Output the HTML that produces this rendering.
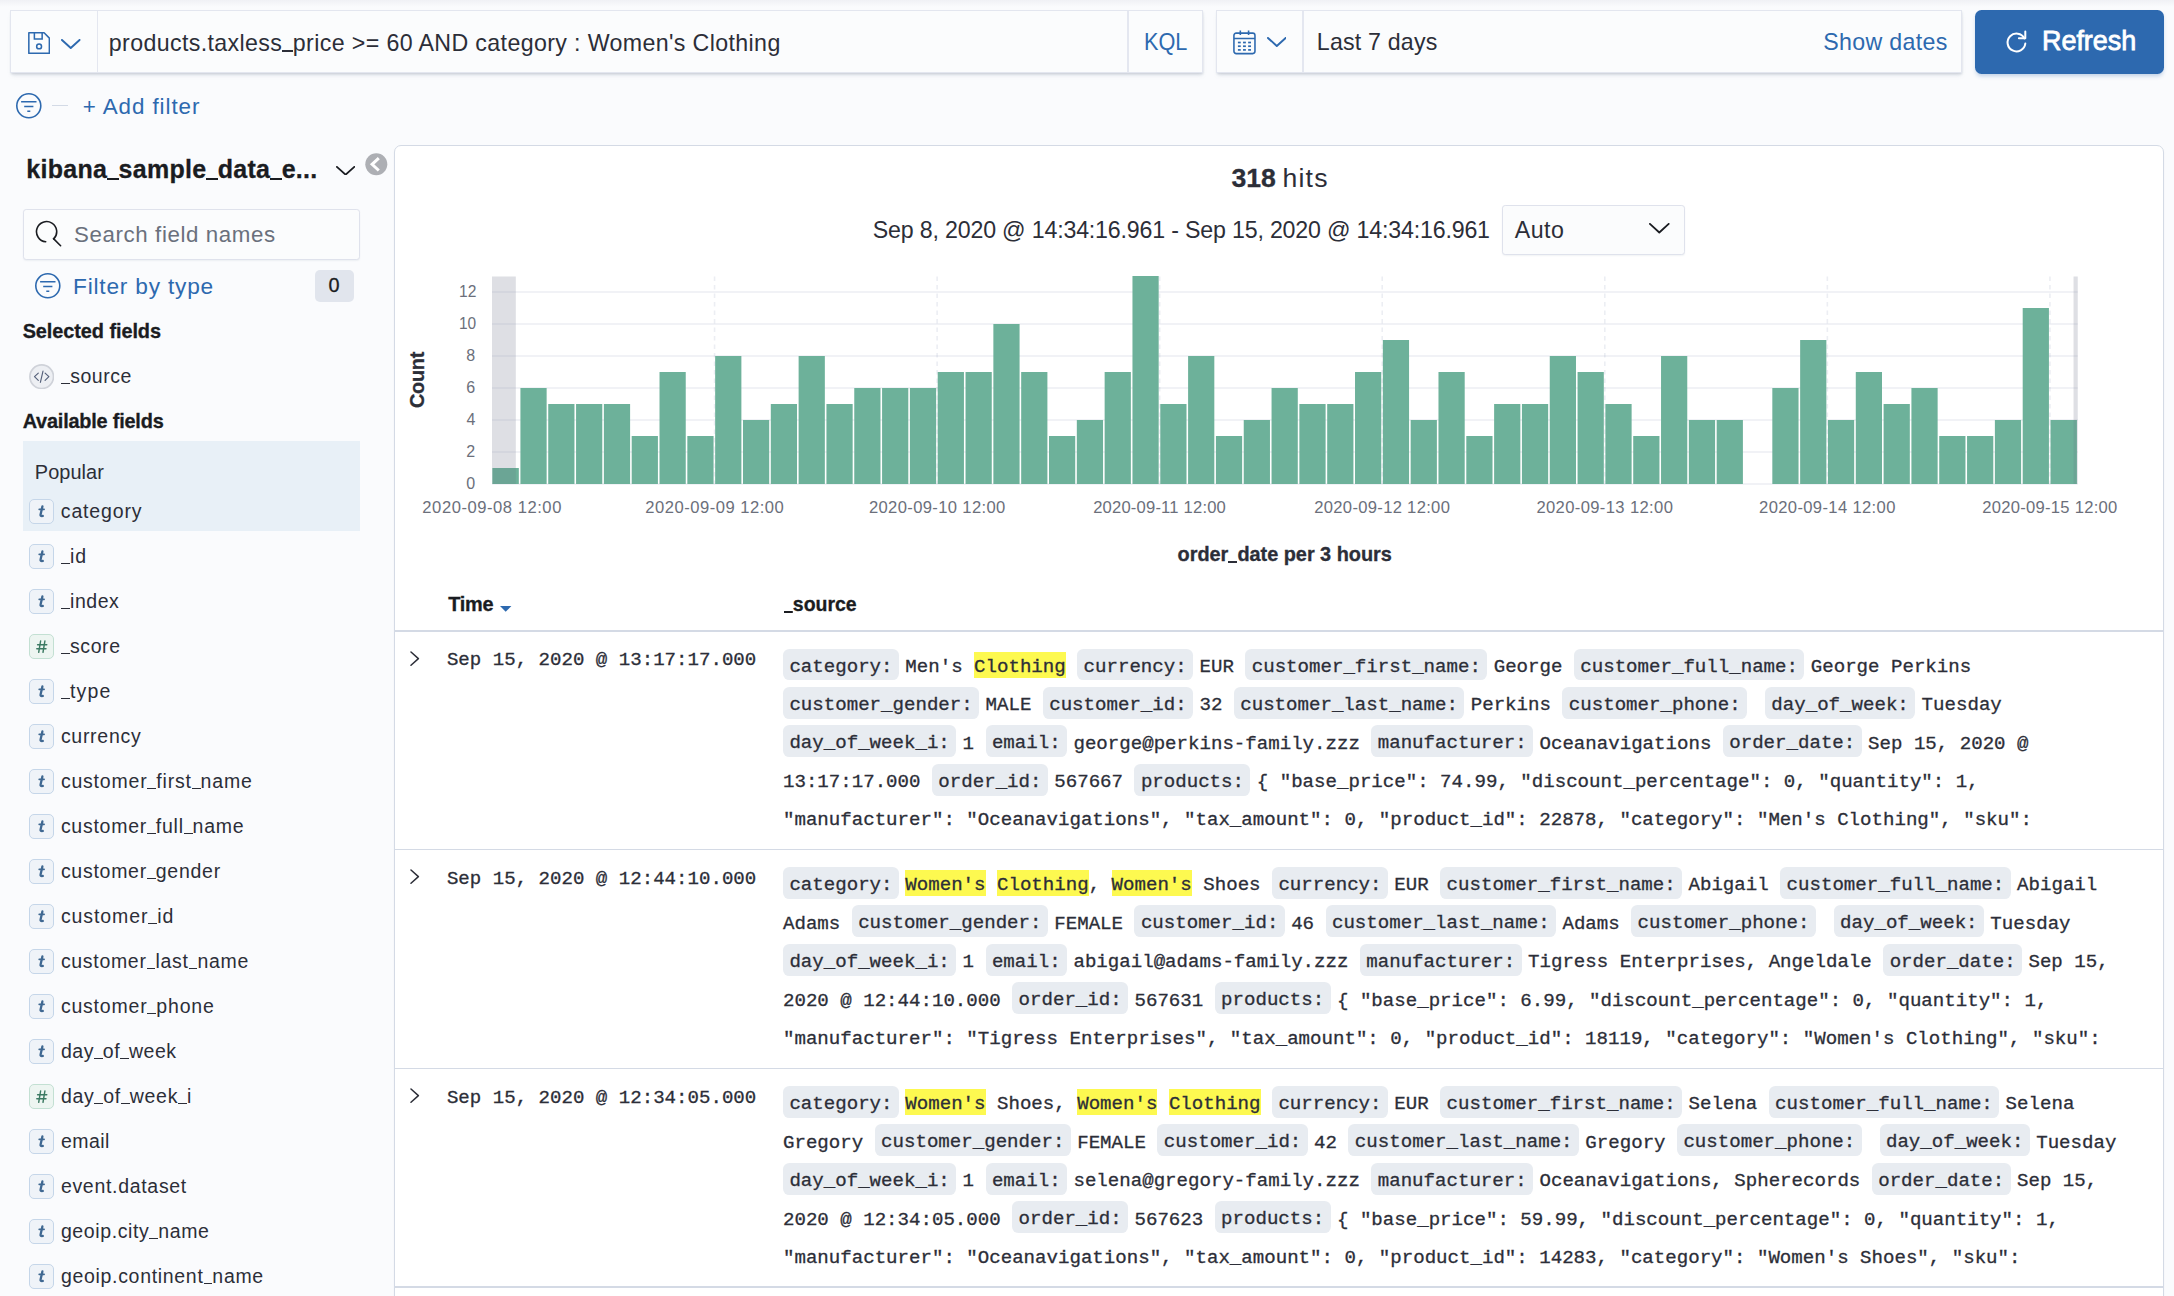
<!DOCTYPE html>
<html lang="en"><head><meta charset="utf-8"><title>Discover - Kibana</title><style>
html,body{margin:0;padding:0;width:2174px;height:1296px;overflow:hidden;background:#fafbfd}
.root{width:2174px;height:1296px;position:relative;overflow:hidden;background:#fafbfd;font-family:'Liberation Sans', sans-serif;}
.src{position:absolute;left:783px;font:400 19.1px/38.4px 'Liberation Mono', monospace;color:#2c2e38;white-space:pre;-webkit-text-stroke:0.3px #2c2e38;}
.src b{font-weight:400;background:#e8ecf1;padding:7.3px 6.4px 2.6px;margin-right:6.4px;border-radius:6.4px;}
.src i{font-style:normal;background:#fdf950;padding:4.1px 0 0;}
</style></head>
<body>
<div class="root">
<div style="position:absolute;left:0.00px;top:0.00px;width:2174.00px;height:7.00px;background:linear-gradient(to bottom,#f0f1f5,#fafbfd)"></div>
<div style="position:absolute;left:10.00px;top:10.00px;width:1192.60px;height:63.00px;background:#fbfcfd;border:1.8px solid #e3e6ef;box-sizing:border-box;box-shadow:0 1.5px 2px -0.5px rgba(152,162,179,.35),0 3px 4px -1.5px rgba(152,162,179,.3);"></div>
<div style="position:absolute;left:96.50px;top:11.00px;width:1.50px;height:61.00px;background:#e4e7f0"></div>
<div style="position:absolute;left:1127.00px;top:11.00px;width:1.50px;height:61.00px;background:#e4e7f0"></div>
<div style="position:absolute;left:1216.00px;top:10.00px;width:745.50px;height:63.00px;background:#fbfcfd;border:1.8px solid #e3e6ef;box-sizing:border-box;box-shadow:0 1.5px 2px -0.5px rgba(152,162,179,.35),0 3px 4px -1.5px rgba(152,162,179,.3);"></div>
<div style="position:absolute;left:1302.30px;top:11.00px;width:1.50px;height:61.00px;background:#e4e7f0"></div>
<svg style="position:absolute;left:27.60px;top:32.00px;" width="22.20" height="22.20" viewBox="0 0 16 16"><path d="M0.6 0.6h11l3.8 3.8v11H0.6z" fill="none" stroke="#2d69af" stroke-width="1.1" stroke-linejoin="round"/><path d="M4.6 0.8v4.2h5.6V0.8" fill="none" stroke="#2d69af" stroke-width="1.1"/><circle cx="8" cy="10.4" r="1.75" fill="none" stroke="#2d69af" stroke-width="1.1"/></svg>
<svg style="position:absolute;left:61.00px;top:38.60px;" width="19.50" height="10.00" viewBox="0 0 19.5 10"><path d="M0.95 0.95L9.75 9.05L18.55 0.95" fill="none" stroke="#2d69af" stroke-width="1.9" stroke-linecap="round" stroke-linejoin="round"/></svg>
<span id="q" style="position:absolute;left:108.78px;top:32.00px;font:400 23.2px/1 'Liberation Sans', sans-serif;color:#2c2e38;letter-spacing:0.372px;white-space:pre;">products.taxless<i style="display:inline-block;width:.455em;height:0.075em;background:#2c2e38;vertical-align:-0.05em"></i>price &gt;= 60 AND category : Women's Clothing</span>
<span id="kql" style="position:absolute;left:1144.18px;top:31.00px;font:400 23.2px/1 'Liberation Sans', sans-serif;color:#2d69af;letter-spacing:0.000px;white-space:pre;transform:scaleX(0.9353);transform-origin:0 0;">KQL</span>
<svg style="position:absolute;left:1233.10px;top:30.40px;" width="22.90" height="24.60" viewBox="0 0 16 17.3"><rect x="0.6" y="2.2" width="14.8" height="14.4" rx="1.6" fill="none" stroke="#2d69af" stroke-width="1.1"/><path d="M0.6 6h14.8M5.1 0.3v3.2M10.9 0.3v3.2" stroke="#2d69af" stroke-width="1.1" fill="none"/><g fill="#2d69af"><rect x="3.4" y="8.2" width="2" height="1.2"/><rect x="7" y="8.2" width="2" height="1.2"/><rect x="10.6" y="8.2" width="2" height="1.2"/><rect x="3.4" y="10.8" width="2" height="1.2"/><rect x="7" y="10.8" width="2" height="1.2"/><rect x="10.6" y="10.8" width="2" height="1.2"/><rect x="3.4" y="13.4" width="2" height="1.2"/><rect x="7" y="13.4" width="2" height="1.2"/><rect x="10.6" y="13.4" width="2" height="1.2"/></g></svg>
<svg style="position:absolute;left:1266.80px;top:36.80px;" width="19.60" height="10.00" viewBox="0 0 19.6 10"><path d="M0.95 0.95L9.80 9.05L18.65 0.95" fill="none" stroke="#2d69af" stroke-width="1.9" stroke-linecap="round" stroke-linejoin="round"/></svg>
<span id="l7" style="position:absolute;left:1316.83px;top:31.00px;font:400 23.2px/1 'Liberation Sans', sans-serif;color:#2c2e38;letter-spacing:0.191px;white-space:pre;">Last 7 days</span>
<span id="sd" style="position:absolute;left:1823.32px;top:31.00px;font:400 23.2px/1 'Liberation Sans', sans-serif;color:#2d69af;letter-spacing:0.309px;white-space:pre;">Show dates</span>
<div style="position:absolute;left:1975.00px;top:10.00px;width:189.00px;height:63.50px;background:#2d69af;border-radius:6.5px;box-shadow:0 3px 4px -1px rgba(45,105,175,.3);"></div>
<svg style="position:absolute;left:2004.00px;top:29.50px;" width="23.00" height="24.00" viewBox="0 0 23 24"><path d="M20.4 8.4A8.9 8.9 0 1 0 21.3 13.6" fill="none" stroke="#fff" stroke-width="2" stroke-linecap="round"/><path d="M21.3 1.6V8.3H14.9" fill="none" stroke="#fff" stroke-width="2" stroke-linecap="round" stroke-linejoin="round"/></svg>
<span id="rf" style="position:absolute;left:2041.66px;top:27.00px;font:400 27.5px/1 'Liberation Sans', sans-serif;color:#fff;letter-spacing:0.000px;white-space:pre;transform:scaleX(0.9784);transform-origin:0 0;-webkit-text-stroke:0.8px #fff;">Refresh</span>
<svg style="position:absolute;left:15.30px;top:92.20px;" width="27.60" height="27.60" viewBox="-13.8 -13.8 27.6 27.6"><circle r="12.0" fill="none" stroke="#2d69af" stroke-width="1.6"/><path d="M-7.7 -4H7.7M-4.6 0.8H4.6M-1.5 5.5H1.5" stroke="#2d69af" stroke-width="1.5" fill="none"/></svg>
<div style="position:absolute;left:52.00px;top:104.60px;width:15.50px;height:1.50px;background:#d3dae6"></div>
<span id="af" style="position:absolute;left:82.71px;top:96.00px;font:400 22.4px/1 'Liberation Sans', sans-serif;color:#2d69af;letter-spacing:0.939px;white-space:pre;">+ Add filter</span>
<span id="ttl" style="position:absolute;left:26.26px;top:157.00px;font:700 25px/1 'Liberation Sans', sans-serif;color:#1a1c21;letter-spacing:0.283px;white-space:pre;-webkit-text-stroke:0.3px #1a1c21;">kibana<i style="display:inline-block;width:.455em;height:0.1em;background:#1a1c21;vertical-align:-0.08em"></i>sample<i style="display:inline-block;width:.455em;height:0.1em;background:#1a1c21;vertical-align:-0.08em"></i>data<i style="display:inline-block;width:.455em;height:0.1em;background:#1a1c21;vertical-align:-0.08em"></i>e...</span>
<svg style="position:absolute;left:336.30px;top:165.90px;" width="19.20" height="9.60" viewBox="0 0 19.2 9.6"><path d="M0.90 0.90L9.60 8.70L18.30 0.90" fill="none" stroke="#1a1c21" stroke-width="1.8" stroke-linecap="round" stroke-linejoin="round"/></svg>
<svg style="position:absolute;left:365.00px;top:153.40px;" width="22.60" height="22.60" viewBox="-11.3 -11.3 22.6 22.6"><circle r="11" fill="#adafb4"/><path d="M2.5 -6.2L-4.2 0L2.5 6.2" fill="none" stroke="#fff" stroke-width="3" stroke-linecap="butt" stroke-linejoin="miter"/></svg>
<div style="position:absolute;left:23.00px;top:209.00px;width:337.00px;height:51.00px;background:#fbfcfd;border:1.8px solid #dfe2ec;box-sizing:border-box;border-radius:3.2px;box-shadow:0 1px 1.5px rgba(152,162,179,.12);"></div>
<svg style="position:absolute;left:35.00px;top:219.50px;" width="27.00" height="27.00" viewBox="0 0 27 27"><path d="M18.74 18.84A10.1 10.1 0 1 0 10.7 21.76" fill="none" stroke="#1a1c21" stroke-width="1.6" stroke-linecap="round"/><path d="M18.5 18.6L25.6 25.7" stroke="#1a1c21" stroke-width="1.6" stroke-linecap="round"/></svg>
<span id="sf" style="position:absolute;left:73.98px;top:224.00px;font:400 22.3px/1 'Liberation Sans', sans-serif;color:#6a707c;letter-spacing:0.609px;white-space:pre;">Search field names</span>
<svg style="position:absolute;left:34.40px;top:272.40px;" width="27.60" height="27.60" viewBox="-13.8 -13.8 27.6 27.6"><circle r="12.0" fill="none" stroke="#2d69af" stroke-width="1.6"/><path d="M-7.7 -4H7.7M-4.6 0.8H4.6M-1.5 5.5H1.5" stroke="#2d69af" stroke-width="1.5" fill="none"/></svg>
<span id="fbt" style="position:absolute;left:73.03px;top:275.00px;font:400 22.7px/1 'Liberation Sans', sans-serif;color:#2d69af;letter-spacing:0.797px;white-space:pre;">Filter by type</span>
<div style="position:absolute;left:315.00px;top:270.20px;width:38.60px;height:31.80px;background:#e1e5ed;border-radius:5px"></div>
<span id="b0" style="position:absolute;left:328.57px;top:276.00px;font:400 19.9px/1 'Liberation Sans', sans-serif;color:#1a1c21;letter-spacing:0.000px;white-space:pre;-webkit-text-stroke:0.3px;">0</span>
<span id="self" style="position:absolute;left:22.67px;top:322.00px;font:700 19.9px/1 'Liberation Sans', sans-serif;color:#1a1c21;letter-spacing:-0.069px;white-space:pre;-webkit-text-stroke:0.3px #1a1c21;">Selected fields</span>
<svg style="position:absolute;left:29.00px;top:363.70px;" width="25.40" height="25.40" viewBox="-12.7 -12.7 25.4 25.4"><circle r="11.8" fill="#edeff3" stroke="#cfd2d9" stroke-width="1.7"/><path d="M-3.4 -3.6L-7.2 0L-3.4 3.6M3.4 -3.6L7.2 0L3.4 3.6M1.3 -5.6L-1.3 5.6" fill="none" stroke="#55607a" stroke-width="1.15" stroke-linecap="round" stroke-linejoin="round"/></svg>
<span id="f_source" style="position:absolute;left:61.30px;top:367.00px;font:400 19.5px/1 'Liberation Sans', sans-serif;color:#2c2e38;letter-spacing:0.524px;white-space:pre;"><i style="display:inline-block;width:.455em;height:0.075em;background:#2c2e38;vertical-align:-0.05em"></i>source</span>
<span id="avf" style="position:absolute;left:22.70px;top:412.00px;font:700 19.9px/1 'Liberation Sans', sans-serif;color:#1a1c21;letter-spacing:-0.205px;white-space:pre;-webkit-text-stroke:0.3px #1a1c21;">Available fields</span>
<div style="position:absolute;left:22.80px;top:440.70px;width:337.40px;height:90.00px;background:#e8f0f7"></div>
<span id="pop" style="position:absolute;left:34.85px;top:463.00px;font:400 19.9px/1 'Liberation Sans', sans-serif;color:#2c2e38;letter-spacing:0.058px;white-space:pre;">Popular</span>
<div style="position:absolute;left:29.30px;top:498.90px;width:24.90px;height:24.90px;box-sizing:border-box;border:1.6px solid #c5d6e9;background:#eff3f8;border-radius:5px"></div>
<svg style="position:absolute;left:29.30px;top:498.90px;" width="24.90" height="24.90" viewBox="0 0 24.9 24.9"><path d="M13.4 7.4L11.6 15.4Q11.1 17.6 13.8 17" fill="none" stroke="#3f6892" stroke-width="2.3" stroke-linecap="round" stroke-linejoin="round"/><path d="M10.2 10.3H15.1" stroke="#3f6892" stroke-width="1.7" stroke-linecap="round"/></svg>
<span id="fld0" style="position:absolute;left:60.81px;top:502.00px;font:400 19.5px/1 'Liberation Sans', sans-serif;color:#2c2e38;letter-spacing:0.839px;white-space:pre;">category</span>
<div style="position:absolute;left:29.30px;top:543.90px;width:24.90px;height:24.90px;box-sizing:border-box;border:1.6px solid #c5d6e9;background:#eff3f8;border-radius:5px"></div>
<svg style="position:absolute;left:29.30px;top:543.90px;" width="24.90" height="24.90" viewBox="0 0 24.9 24.9"><path d="M13.4 7.4L11.6 15.4Q11.1 17.6 13.8 17" fill="none" stroke="#3f6892" stroke-width="2.3" stroke-linecap="round" stroke-linejoin="round"/><path d="M10.2 10.3H15.1" stroke="#3f6892" stroke-width="1.7" stroke-linecap="round"/></svg>
<span id="fld1" style="position:absolute;left:61.20px;top:547.00px;font:400 19.5px/1 'Liberation Sans', sans-serif;color:#2c2e38;letter-spacing:0.832px;white-space:pre;"><i style="display:inline-block;width:.455em;height:0.075em;background:#2c2e38;vertical-align:-0.05em"></i>id</span>
<div style="position:absolute;left:29.30px;top:588.90px;width:24.90px;height:24.90px;box-sizing:border-box;border:1.6px solid #c5d6e9;background:#eff3f8;border-radius:5px"></div>
<svg style="position:absolute;left:29.30px;top:588.90px;" width="24.90" height="24.90" viewBox="0 0 24.9 24.9"><path d="M13.4 7.4L11.6 15.4Q11.1 17.6 13.8 17" fill="none" stroke="#3f6892" stroke-width="2.3" stroke-linecap="round" stroke-linejoin="round"/><path d="M10.2 10.3H15.1" stroke="#3f6892" stroke-width="1.7" stroke-linecap="round"/></svg>
<span id="fld2" style="position:absolute;left:61.20px;top:592.00px;font:400 19.5px/1 'Liberation Sans', sans-serif;color:#2c2e38;letter-spacing:0.531px;white-space:pre;"><i style="display:inline-block;width:.455em;height:0.075em;background:#2c2e38;vertical-align:-0.05em"></i>index</span>
<div style="position:absolute;left:29.30px;top:633.90px;width:24.90px;height:24.90px;box-sizing:border-box;border:1.6px solid #c3e0d3;background:#edf5f1;border-radius:5px"></div>
<svg style="position:absolute;left:29.30px;top:633.90px;" width="24.90" height="24.90" viewBox="0 0 24.9 24.9"><path d="M11.6 7L9.7 18.4M15.9 7L14 18.4M8.6 10.8H17.8M7.8 14.8H17" fill="none" stroke="#3c7a63" stroke-width="1.45" stroke-linecap="round"/></svg>
<span id="fld3" style="position:absolute;left:61.20px;top:637.00px;font:400 19.5px/1 'Liberation Sans', sans-serif;color:#2c2e38;letter-spacing:0.569px;white-space:pre;"><i style="display:inline-block;width:.455em;height:0.075em;background:#2c2e38;vertical-align:-0.05em"></i>score</span>
<div style="position:absolute;left:29.30px;top:678.90px;width:24.90px;height:24.90px;box-sizing:border-box;border:1.6px solid #c5d6e9;background:#eff3f8;border-radius:5px"></div>
<svg style="position:absolute;left:29.30px;top:678.90px;" width="24.90" height="24.90" viewBox="0 0 24.9 24.9"><path d="M13.4 7.4L11.6 15.4Q11.1 17.6 13.8 17" fill="none" stroke="#3f6892" stroke-width="2.3" stroke-linecap="round" stroke-linejoin="round"/><path d="M10.2 10.3H15.1" stroke="#3f6892" stroke-width="1.7" stroke-linecap="round"/></svg>
<span id="fld4" style="position:absolute;left:61.20px;top:682.00px;font:400 19.5px/1 'Liberation Sans', sans-serif;color:#2c2e38;letter-spacing:1.142px;white-space:pre;"><i style="display:inline-block;width:.455em;height:0.075em;background:#2c2e38;vertical-align:-0.05em"></i>type</span>
<div style="position:absolute;left:29.30px;top:723.90px;width:24.90px;height:24.90px;box-sizing:border-box;border:1.6px solid #c5d6e9;background:#eff3f8;border-radius:5px"></div>
<svg style="position:absolute;left:29.30px;top:723.90px;" width="24.90" height="24.90" viewBox="0 0 24.9 24.9"><path d="M13.4 7.4L11.6 15.4Q11.1 17.6 13.8 17" fill="none" stroke="#3f6892" stroke-width="2.3" stroke-linecap="round" stroke-linejoin="round"/><path d="M10.2 10.3H15.1" stroke="#3f6892" stroke-width="1.7" stroke-linecap="round"/></svg>
<span id="fld5" style="position:absolute;left:60.88px;top:727.00px;font:400 19.5px/1 'Liberation Sans', sans-serif;color:#2c2e38;letter-spacing:0.715px;white-space:pre;">currency</span>
<div style="position:absolute;left:29.30px;top:768.90px;width:24.90px;height:24.90px;box-sizing:border-box;border:1.6px solid #c5d6e9;background:#eff3f8;border-radius:5px"></div>
<svg style="position:absolute;left:29.30px;top:768.90px;" width="24.90" height="24.90" viewBox="0 0 24.9 24.9"><path d="M13.4 7.4L11.6 15.4Q11.1 17.6 13.8 17" fill="none" stroke="#3f6892" stroke-width="2.3" stroke-linecap="round" stroke-linejoin="round"/><path d="M10.2 10.3H15.1" stroke="#3f6892" stroke-width="1.7" stroke-linecap="round"/></svg>
<span id="fld6" style="position:absolute;left:60.88px;top:772.00px;font:400 19.5px/1 'Liberation Sans', sans-serif;color:#2c2e38;letter-spacing:0.799px;white-space:pre;">customer<i style="display:inline-block;width:.455em;height:0.075em;background:#2c2e38;vertical-align:-0.05em"></i>first<i style="display:inline-block;width:.455em;height:0.075em;background:#2c2e38;vertical-align:-0.05em"></i>name</span>
<div style="position:absolute;left:29.30px;top:813.90px;width:24.90px;height:24.90px;box-sizing:border-box;border:1.6px solid #c5d6e9;background:#eff3f8;border-radius:5px"></div>
<svg style="position:absolute;left:29.30px;top:813.90px;" width="24.90" height="24.90" viewBox="0 0 24.9 24.9"><path d="M13.4 7.4L11.6 15.4Q11.1 17.6 13.8 17" fill="none" stroke="#3f6892" stroke-width="2.3" stroke-linecap="round" stroke-linejoin="round"/><path d="M10.2 10.3H15.1" stroke="#3f6892" stroke-width="1.7" stroke-linecap="round"/></svg>
<span id="fld7" style="position:absolute;left:60.88px;top:817.00px;font:400 19.5px/1 'Liberation Sans', sans-serif;color:#2c2e38;letter-spacing:0.739px;white-space:pre;">customer<i style="display:inline-block;width:.455em;height:0.075em;background:#2c2e38;vertical-align:-0.05em"></i>full<i style="display:inline-block;width:.455em;height:0.075em;background:#2c2e38;vertical-align:-0.05em"></i>name</span>
<div style="position:absolute;left:29.30px;top:858.90px;width:24.90px;height:24.90px;box-sizing:border-box;border:1.6px solid #c5d6e9;background:#eff3f8;border-radius:5px"></div>
<svg style="position:absolute;left:29.30px;top:858.90px;" width="24.90" height="24.90" viewBox="0 0 24.9 24.9"><path d="M13.4 7.4L11.6 15.4Q11.1 17.6 13.8 17" fill="none" stroke="#3f6892" stroke-width="2.3" stroke-linecap="round" stroke-linejoin="round"/><path d="M10.2 10.3H15.1" stroke="#3f6892" stroke-width="1.7" stroke-linecap="round"/></svg>
<span id="fld8" style="position:absolute;left:60.88px;top:862.00px;font:400 19.5px/1 'Liberation Sans', sans-serif;color:#2c2e38;letter-spacing:0.729px;white-space:pre;">customer<i style="display:inline-block;width:.455em;height:0.075em;background:#2c2e38;vertical-align:-0.05em"></i>gender</span>
<div style="position:absolute;left:29.30px;top:903.90px;width:24.90px;height:24.90px;box-sizing:border-box;border:1.6px solid #c5d6e9;background:#eff3f8;border-radius:5px"></div>
<svg style="position:absolute;left:29.30px;top:903.90px;" width="24.90" height="24.90" viewBox="0 0 24.9 24.9"><path d="M13.4 7.4L11.6 15.4Q11.1 17.6 13.8 17" fill="none" stroke="#3f6892" stroke-width="2.3" stroke-linecap="round" stroke-linejoin="round"/><path d="M10.2 10.3H15.1" stroke="#3f6892" stroke-width="1.7" stroke-linecap="round"/></svg>
<span id="fld9" style="position:absolute;left:60.88px;top:907.00px;font:400 19.5px/1 'Liberation Sans', sans-serif;color:#2c2e38;letter-spacing:0.919px;white-space:pre;">customer<i style="display:inline-block;width:.455em;height:0.075em;background:#2c2e38;vertical-align:-0.05em"></i>id</span>
<div style="position:absolute;left:29.30px;top:948.90px;width:24.90px;height:24.90px;box-sizing:border-box;border:1.6px solid #c5d6e9;background:#eff3f8;border-radius:5px"></div>
<svg style="position:absolute;left:29.30px;top:948.90px;" width="24.90" height="24.90" viewBox="0 0 24.9 24.9"><path d="M13.4 7.4L11.6 15.4Q11.1 17.6 13.8 17" fill="none" stroke="#3f6892" stroke-width="2.3" stroke-linecap="round" stroke-linejoin="round"/><path d="M10.2 10.3H15.1" stroke="#3f6892" stroke-width="1.7" stroke-linecap="round"/></svg>
<span id="fld10" style="position:absolute;left:60.88px;top:952.00px;font:400 19.5px/1 'Liberation Sans', sans-serif;color:#2c2e38;letter-spacing:0.688px;white-space:pre;">customer<i style="display:inline-block;width:.455em;height:0.075em;background:#2c2e38;vertical-align:-0.05em"></i>last<i style="display:inline-block;width:.455em;height:0.075em;background:#2c2e38;vertical-align:-0.05em"></i>name</span>
<div style="position:absolute;left:29.30px;top:993.90px;width:24.90px;height:24.90px;box-sizing:border-box;border:1.6px solid #c5d6e9;background:#eff3f8;border-radius:5px"></div>
<svg style="position:absolute;left:29.30px;top:993.90px;" width="24.90" height="24.90" viewBox="0 0 24.9 24.9"><path d="M13.4 7.4L11.6 15.4Q11.1 17.6 13.8 17" fill="none" stroke="#3f6892" stroke-width="2.3" stroke-linecap="round" stroke-linejoin="round"/><path d="M10.2 10.3H15.1" stroke="#3f6892" stroke-width="1.7" stroke-linecap="round"/></svg>
<span id="fld11" style="position:absolute;left:60.88px;top:997.00px;font:400 19.5px/1 'Liberation Sans', sans-serif;color:#2c2e38;letter-spacing:0.801px;white-space:pre;">customer<i style="display:inline-block;width:.455em;height:0.075em;background:#2c2e38;vertical-align:-0.05em"></i>phone</span>
<div style="position:absolute;left:29.30px;top:1038.90px;width:24.90px;height:24.90px;box-sizing:border-box;border:1.6px solid #c5d6e9;background:#eff3f8;border-radius:5px"></div>
<svg style="position:absolute;left:29.30px;top:1038.90px;" width="24.90" height="24.90" viewBox="0 0 24.9 24.9"><path d="M13.4 7.4L11.6 15.4Q11.1 17.6 13.8 17" fill="none" stroke="#3f6892" stroke-width="2.3" stroke-linecap="round" stroke-linejoin="round"/><path d="M10.2 10.3H15.1" stroke="#3f6892" stroke-width="1.7" stroke-linecap="round"/></svg>
<span id="fld12" style="position:absolute;left:60.91px;top:1042.00px;font:400 19.5px/1 'Liberation Sans', sans-serif;color:#2c2e38;letter-spacing:0.519px;white-space:pre;">day<i style="display:inline-block;width:.455em;height:0.075em;background:#2c2e38;vertical-align:-0.05em"></i>of<i style="display:inline-block;width:.455em;height:0.075em;background:#2c2e38;vertical-align:-0.05em"></i>week</span>
<div style="position:absolute;left:29.30px;top:1083.90px;width:24.90px;height:24.90px;box-sizing:border-box;border:1.6px solid #c3e0d3;background:#edf5f1;border-radius:5px"></div>
<svg style="position:absolute;left:29.30px;top:1083.90px;" width="24.90" height="24.90" viewBox="0 0 24.9 24.9"><path d="M11.6 7L9.7 18.4M15.9 7L14 18.4M8.6 10.8H17.8M7.8 14.8H17" fill="none" stroke="#3c7a63" stroke-width="1.45" stroke-linecap="round"/></svg>
<span id="fld13" style="position:absolute;left:60.91px;top:1087.00px;font:400 19.5px/1 'Liberation Sans', sans-serif;color:#2c2e38;letter-spacing:0.690px;white-space:pre;">day<i style="display:inline-block;width:.455em;height:0.075em;background:#2c2e38;vertical-align:-0.05em"></i>of<i style="display:inline-block;width:.455em;height:0.075em;background:#2c2e38;vertical-align:-0.05em"></i>week<i style="display:inline-block;width:.455em;height:0.075em;background:#2c2e38;vertical-align:-0.05em"></i>i</span>
<div style="position:absolute;left:29.30px;top:1128.90px;width:24.90px;height:24.90px;box-sizing:border-box;border:1.6px solid #c5d6e9;background:#eff3f8;border-radius:5px"></div>
<svg style="position:absolute;left:29.30px;top:1128.90px;" width="24.90" height="24.90" viewBox="0 0 24.9 24.9"><path d="M13.4 7.4L11.6 15.4Q11.1 17.6 13.8 17" fill="none" stroke="#3f6892" stroke-width="2.3" stroke-linecap="round" stroke-linejoin="round"/><path d="M10.2 10.3H15.1" stroke="#3f6892" stroke-width="1.7" stroke-linecap="round"/></svg>
<span id="fld14" style="position:absolute;left:60.88px;top:1132.00px;font:400 19.5px/1 'Liberation Sans', sans-serif;color:#2c2e38;letter-spacing:0.472px;white-space:pre;">email</span>
<div style="position:absolute;left:29.30px;top:1173.90px;width:24.90px;height:24.90px;box-sizing:border-box;border:1.6px solid #c5d6e9;background:#eff3f8;border-radius:5px"></div>
<svg style="position:absolute;left:29.30px;top:1173.90px;" width="24.90" height="24.90" viewBox="0 0 24.9 24.9"><path d="M13.4 7.4L11.6 15.4Q11.1 17.6 13.8 17" fill="none" stroke="#3f6892" stroke-width="2.3" stroke-linecap="round" stroke-linejoin="round"/><path d="M10.2 10.3H15.1" stroke="#3f6892" stroke-width="1.7" stroke-linecap="round"/></svg>
<span id="fld15" style="position:absolute;left:60.88px;top:1177.00px;font:400 19.5px/1 'Liberation Sans', sans-serif;color:#2c2e38;letter-spacing:0.693px;white-space:pre;">event.dataset</span>
<div style="position:absolute;left:29.30px;top:1218.90px;width:24.90px;height:24.90px;box-sizing:border-box;border:1.6px solid #c5d6e9;background:#eff3f8;border-radius:5px"></div>
<svg style="position:absolute;left:29.30px;top:1218.90px;" width="24.90" height="24.90" viewBox="0 0 24.9 24.9"><path d="M13.4 7.4L11.6 15.4Q11.1 17.6 13.8 17" fill="none" stroke="#3f6892" stroke-width="2.3" stroke-linecap="round" stroke-linejoin="round"/><path d="M10.2 10.3H15.1" stroke="#3f6892" stroke-width="1.7" stroke-linecap="round"/></svg>
<span id="fld16" style="position:absolute;left:60.91px;top:1222.00px;font:400 19.5px/1 'Liberation Sans', sans-serif;color:#2c2e38;letter-spacing:0.611px;white-space:pre;">geoip.city<i style="display:inline-block;width:.455em;height:0.075em;background:#2c2e38;vertical-align:-0.05em"></i>name</span>
<div style="position:absolute;left:29.30px;top:1263.90px;width:24.90px;height:24.90px;box-sizing:border-box;border:1.6px solid #c5d6e9;background:#eff3f8;border-radius:5px"></div>
<svg style="position:absolute;left:29.30px;top:1263.90px;" width="24.90" height="24.90" viewBox="0 0 24.9 24.9"><path d="M13.4 7.4L11.6 15.4Q11.1 17.6 13.8 17" fill="none" stroke="#3f6892" stroke-width="2.3" stroke-linecap="round" stroke-linejoin="round"/><path d="M10.2 10.3H15.1" stroke="#3f6892" stroke-width="1.7" stroke-linecap="round"/></svg>
<span id="fld17" style="position:absolute;left:60.91px;top:1267.00px;font:400 19.5px/1 'Liberation Sans', sans-serif;color:#2c2e38;letter-spacing:0.688px;white-space:pre;">geoip.continent<i style="display:inline-block;width:.455em;height:0.075em;background:#2c2e38;vertical-align:-0.05em"></i>name</span>
<div style="position:absolute;left:393.60px;top:144.60px;width:1770.40px;height:1200.00px;background:#fff;border:1.8px solid #d4dae5;box-sizing:border-box;border-radius:7px;box-shadow:0 2px 3px -1px rgba(152,162,179,.2);"></div>
<span id="h318" style="position:absolute;left:1231.51px;top:165.00px;font:700 26.6px/1 'Liberation Sans', sans-serif;color:#2c2e38;letter-spacing:0.016px;white-space:pre;-webkit-text-stroke:0.3px #2c2e38;">318</span>
<span id="hits" style="position:absolute;left:1282.41px;top:165.00px;font:400 26.6px/1 'Liberation Sans', sans-serif;color:#2c2e38;letter-spacing:1.232px;white-space:pre;">hits</span>
<span id="rng" style="position:absolute;left:872.82px;top:219.00px;font:400 23.2px/1 'Liberation Sans', sans-serif;color:#2c2e38;letter-spacing:-0.183px;white-space:pre;">Sep 8, 2020 @ 14:34:16.961 - Sep 15, 2020 @ 14:34:16.961</span>
<div style="position:absolute;left:1502.00px;top:204.50px;width:183.00px;height:50.20px;background:#fbfcfd;border:1.8px solid #dfe2ec;box-sizing:border-box;border-radius:3.2px;box-shadow:0 1px 1.5px rgba(152,162,179,.12);"></div>
<span id="auto" style="position:absolute;left:1514.64px;top:219.00px;font:400 23.2px/1 'Liberation Sans', sans-serif;color:#2c2e38;letter-spacing:0.552px;white-space:pre;">Auto</span>
<svg style="position:absolute;left:1649.00px;top:223.40px;" width="20.60" height="10.40" viewBox="0 0 20.6 10.4"><path d="M0.90 0.90L10.30 9.50L19.70 0.90" fill="none" stroke="#1a1c21" stroke-width="1.8" stroke-linecap="round" stroke-linejoin="round"/></svg>
<svg style="position:absolute;left:0.00px;top:0.00px;" width="2174.00" height="600.00" viewBox="0 0 2174 600"><path d="M714.56 276.5V484.0" stroke="#eceef3" stroke-width="1.6" stroke-dasharray="4.5 4" fill="none"/><path d="M937.12 276.5V484.0" stroke="#eceef3" stroke-width="1.6" stroke-dasharray="4.5 4" fill="none"/><path d="M1159.68 276.5V484.0" stroke="#eceef3" stroke-width="1.6" stroke-dasharray="4.5 4" fill="none"/><path d="M1382.24 276.5V484.0" stroke="#eceef3" stroke-width="1.6" stroke-dasharray="4.5 4" fill="none"/><path d="M1604.80 276.5V484.0" stroke="#eceef3" stroke-width="1.6" stroke-dasharray="4.5 4" fill="none"/><path d="M1827.36 276.5V484.0" stroke="#eceef3" stroke-width="1.6" stroke-dasharray="4.5 4" fill="none"/><path d="M2049.92 276.5V484.0" stroke="#eceef3" stroke-width="1.6" stroke-dasharray="4.5 4" fill="none"/><rect x="492.0" y="276.5" width="23.8" height="207.5" fill="#dedfe4"/><rect x="2073.54" y="276.5" width="4.2" height="207.5" fill="#dedfe4"/><rect x="492.0" y="483.00" width="1585.74" height="2" fill="rgba(150,158,185,0.13)"/><rect x="492.0" y="451.00" width="1585.74" height="2" fill="rgba(150,158,185,0.13)"/><rect x="492.0" y="419.00" width="1585.74" height="2" fill="rgba(150,158,185,0.13)"/><rect x="492.0" y="387.00" width="1585.74" height="2" fill="rgba(150,158,185,0.13)"/><rect x="492.0" y="355.00" width="1585.74" height="2" fill="rgba(150,158,185,0.13)"/><rect x="492.0" y="323.00" width="1585.74" height="2" fill="rgba(150,158,185,0.13)"/><rect x="492.0" y="291.00" width="1585.74" height="2" fill="rgba(150,158,185,0.13)"/><rect x="492.60" y="468.00" width="26.22" height="16.00" fill="#6db19a"/><rect x="520.42" y="388.00" width="26.22" height="96.00" fill="#6db19a"/><rect x="548.24" y="404.00" width="26.22" height="80.00" fill="#6db19a"/><rect x="576.06" y="404.00" width="26.22" height="80.00" fill="#6db19a"/><rect x="603.88" y="404.00" width="26.22" height="80.00" fill="#6db19a"/><rect x="631.70" y="436.00" width="26.22" height="48.00" fill="#6db19a"/><rect x="659.52" y="372.00" width="26.22" height="112.00" fill="#6db19a"/><rect x="687.34" y="436.00" width="26.22" height="48.00" fill="#6db19a"/><rect x="715.16" y="356.00" width="26.22" height="128.00" fill="#6db19a"/><rect x="742.98" y="420.00" width="26.22" height="64.00" fill="#6db19a"/><rect x="770.80" y="404.00" width="26.22" height="80.00" fill="#6db19a"/><rect x="798.62" y="356.00" width="26.22" height="128.00" fill="#6db19a"/><rect x="826.44" y="404.00" width="26.22" height="80.00" fill="#6db19a"/><rect x="854.26" y="388.00" width="26.22" height="96.00" fill="#6db19a"/><rect x="882.08" y="388.00" width="26.22" height="96.00" fill="#6db19a"/><rect x="909.90" y="388.00" width="26.22" height="96.00" fill="#6db19a"/><rect x="937.72" y="372.00" width="26.22" height="112.00" fill="#6db19a"/><rect x="965.54" y="372.00" width="26.22" height="112.00" fill="#6db19a"/><rect x="993.36" y="324.00" width="26.22" height="160.00" fill="#6db19a"/><rect x="1021.18" y="372.00" width="26.22" height="112.00" fill="#6db19a"/><rect x="1049.00" y="436.00" width="26.22" height="48.00" fill="#6db19a"/><rect x="1076.82" y="420.00" width="26.22" height="64.00" fill="#6db19a"/><rect x="1104.64" y="372.00" width="26.22" height="112.00" fill="#6db19a"/><rect x="1132.46" y="276.00" width="26.22" height="208.00" fill="#6db19a"/><rect x="1160.28" y="404.00" width="26.22" height="80.00" fill="#6db19a"/><rect x="1188.10" y="356.00" width="26.22" height="128.00" fill="#6db19a"/><rect x="1215.92" y="436.00" width="26.22" height="48.00" fill="#6db19a"/><rect x="1243.74" y="420.00" width="26.22" height="64.00" fill="#6db19a"/><rect x="1271.56" y="388.00" width="26.22" height="96.00" fill="#6db19a"/><rect x="1299.38" y="404.00" width="26.22" height="80.00" fill="#6db19a"/><rect x="1327.20" y="404.00" width="26.22" height="80.00" fill="#6db19a"/><rect x="1355.02" y="372.00" width="26.22" height="112.00" fill="#6db19a"/><rect x="1382.84" y="340.00" width="26.22" height="144.00" fill="#6db19a"/><rect x="1410.66" y="420.00" width="26.22" height="64.00" fill="#6db19a"/><rect x="1438.48" y="372.00" width="26.22" height="112.00" fill="#6db19a"/><rect x="1466.30" y="436.00" width="26.22" height="48.00" fill="#6db19a"/><rect x="1494.12" y="404.00" width="26.22" height="80.00" fill="#6db19a"/><rect x="1521.94" y="404.00" width="26.22" height="80.00" fill="#6db19a"/><rect x="1549.76" y="356.00" width="26.22" height="128.00" fill="#6db19a"/><rect x="1577.58" y="372.00" width="26.22" height="112.00" fill="#6db19a"/><rect x="1605.40" y="404.00" width="26.22" height="80.00" fill="#6db19a"/><rect x="1633.22" y="436.00" width="26.22" height="48.00" fill="#6db19a"/><rect x="1661.04" y="356.00" width="26.22" height="128.00" fill="#6db19a"/><rect x="1688.86" y="420.00" width="26.22" height="64.00" fill="#6db19a"/><rect x="1716.68" y="420.00" width="26.22" height="64.00" fill="#6db19a"/><rect x="1772.32" y="388.00" width="26.22" height="96.00" fill="#6db19a"/><rect x="1800.14" y="340.00" width="26.22" height="144.00" fill="#6db19a"/><rect x="1827.96" y="420.00" width="26.22" height="64.00" fill="#6db19a"/><rect x="1855.78" y="372.00" width="26.22" height="112.00" fill="#6db19a"/><rect x="1883.60" y="404.00" width="26.22" height="80.00" fill="#6db19a"/><rect x="1911.42" y="388.00" width="26.22" height="96.00" fill="#6db19a"/><rect x="1939.24" y="436.00" width="26.22" height="48.00" fill="#6db19a"/><rect x="1967.06" y="436.00" width="26.22" height="48.00" fill="#6db19a"/><rect x="1994.88" y="420.00" width="26.22" height="64.00" fill="#6db19a"/><rect x="2022.70" y="308.00" width="26.22" height="176.00" fill="#6db19a"/><rect x="2050.52" y="420.00" width="26.22" height="64.00" fill="#6db19a"/><rect x="492.60" y="468.00" width="23.2" height="16.0" fill="#6ba595"/><rect x="2073.54" y="420.00" width="3.2" height="64.0" fill="#6ba595"/></svg>
<span id="y0" style="position:absolute;left:466.29px;top:476.00px;font:400 16px/1 'Liberation Sans', sans-serif;color:#6b6f7b;letter-spacing:0.000px;white-space:pre;">0</span>
<span id="y2" style="position:absolute;left:466.22px;top:444.00px;font:400 16px/1 'Liberation Sans', sans-serif;color:#6b6f7b;letter-spacing:0.000px;white-space:pre;">2</span>
<span id="y4" style="position:absolute;left:466.54px;top:412.00px;font:400 16px/1 'Liberation Sans', sans-serif;color:#6b6f7b;letter-spacing:0.000px;white-space:pre;">4</span>
<span id="y6" style="position:absolute;left:466.20px;top:380.00px;font:400 16px/1 'Liberation Sans', sans-serif;color:#6b6f7b;letter-spacing:0.000px;white-space:pre;">6</span>
<span id="y8" style="position:absolute;left:466.18px;top:348.00px;font:400 16px/1 'Liberation Sans', sans-serif;color:#6b6f7b;letter-spacing:0.000px;white-space:pre;">8</span>
<span id="y10" style="position:absolute;left:458.79px;top:316.00px;font:400 16px/1 'Liberation Sans', sans-serif;color:#6b6f7b;letter-spacing:0.000px;white-space:pre;transform:scaleX(0.9666);transform-origin:0 0;">10</span>
<span id="y12" style="position:absolute;left:458.79px;top:284.00px;font:400 16px/1 'Liberation Sans', sans-serif;color:#6b6f7b;letter-spacing:0.000px;white-space:pre;transform:scaleX(0.9751);transform-origin:0 0;">12</span>
<span id="x0" style="position:absolute;left:422.36px;top:500.00px;font:400 16.6px/1 'Liberation Sans', sans-serif;color:#6b6f7b;letter-spacing:0.532px;white-space:pre;">2020-09-08 12:00</span>
<span id="x1" style="position:absolute;left:645.23px;top:500.00px;font:400 16.6px/1 'Liberation Sans', sans-serif;color:#6b6f7b;letter-spacing:0.506px;white-space:pre;">2020-09-09 12:00</span>
<span id="x2" style="position:absolute;left:868.92px;top:500.00px;font:400 16.6px/1 'Liberation Sans', sans-serif;color:#6b6f7b;letter-spacing:0.360px;white-space:pre;">2020-09-10 12:00</span>
<span id="x3" style="position:absolute;left:1093.14px;top:500.00px;font:400 16.6px/1 'Liberation Sans', sans-serif;color:#6b6f7b;letter-spacing:0.195px;white-space:pre;">2020-09-11 12:00</span>
<span id="x4" style="position:absolute;left:1314.28px;top:500.00px;font:400 16.6px/1 'Liberation Sans', sans-serif;color:#6b6f7b;letter-spacing:0.305px;white-space:pre;">2020-09-12 12:00</span>
<span id="x5" style="position:absolute;left:1536.40px;top:500.00px;font:400 16.6px/1 'Liberation Sans', sans-serif;color:#6b6f7b;letter-spacing:0.366px;white-space:pre;">2020-09-13 12:00</span>
<span id="x6" style="position:absolute;left:1759.08px;top:500.00px;font:400 16.6px/1 'Liberation Sans', sans-serif;color:#6b6f7b;letter-spacing:0.352px;white-space:pre;">2020-09-14 12:00</span>
<span id="x7" style="position:absolute;left:1982.26px;top:500.00px;font:400 16.6px/1 'Liberation Sans', sans-serif;color:#6b6f7b;letter-spacing:0.272px;white-space:pre;">2020-09-15 12:00</span>
<span id="cnt" style="position:absolute;left:418px;top:379.8px;font:700 19.9px/1 'Liberation Sans', sans-serif;color:#2c2e38;white-space:pre;-webkit-text-stroke:0.3px #2c2e38;transform:translate(-50%,-50%) rotate(-90deg);letter-spacing:-0.300px">Count</span>
<span id="xt" style="position:absolute;left:1177.59px;top:545.00px;font:700 19.9px/1 'Liberation Sans', sans-serif;color:#2c2e38;letter-spacing:-0.019px;white-space:pre;-webkit-text-stroke:0.3px #2c2e38;">order<i style="display:inline-block;width:.455em;height:0.1em;background:#2c2e38;vertical-align:-0.08em"></i>date per 3 hours</span>
<span id="th1" style="position:absolute;left:448.22px;top:595.00px;font:700 19.9px/1 'Liberation Sans', sans-serif;color:#1a1c21;letter-spacing:-0.236px;white-space:pre;-webkit-text-stroke:0.3px #1a1c21;">Time</span>
<svg style="position:absolute;left:500.30px;top:605.80px;" width="11.40" height="5.80" viewBox="0 0 11.4 5.8"><path d="M0 0H11.4L5.7 5.8Z" fill="#2d69af"/></svg>
<span id="th2" style="position:absolute;left:783.60px;top:595.00px;font:700 19.9px/1 'Liberation Sans', sans-serif;color:#1a1c21;letter-spacing:0.000px;white-space:pre;transform:scaleX(0.9787);transform-origin:0 0;-webkit-text-stroke:0.3px #1a1c21;"><i style="display:inline-block;width:.455em;height:0.1em;background:#1a1c21;vertical-align:-0.08em"></i>source</span>
<div style="position:absolute;left:395.40px;top:629.80px;width:1767.20px;height:1.80px;background:#d4dae5"></div>
<svg style="position:absolute;left:410.20px;top:650.60px;" width="9.60" height="15.20" viewBox="0 0 9.6 15.2"><path d="M1 1L8.4 7.6L1 14.2" fill="none" stroke="#2c2e38" stroke-width="1.5" stroke-linecap="round" stroke-linejoin="round"/></svg>
<span id="tm0" style="position:absolute;left:446.90px;top:651.00px;font:400 19.1px/1 'Liberation Mono', monospace;color:#2c2e38;letter-spacing:0.000px;white-space:pre;-webkit-text-stroke:0.3px #2c2e38;">Sep 15, 2020 @ 13:17:17.000</span>
<div class="src" style="top:647.81px"><b>category:</b>Men's <i>Clothing</i> <b>currency:</b>EUR <b>customer_first_name:</b>George <b>customer_full_name:</b>George Perkins<br><b>customer_gender:</b>MALE <b>customer_id:</b>32 <b>customer_last_name:</b>Perkins <b>customer_phone:</b> <b>day_of_week:</b>Tuesday<br><b>day_of_week_i:</b>1 <b>email:</b>george@perkins-family.zzz <b>manufacturer:</b>Oceanavigations <b>order_date:</b>Sep 15, 2020 @<br>13:17:17.000 <b>order_id:</b>567667 <b>products:</b>{ "base_price": 74.99, "discount_percentage": 0, "quantity": 1,<br>"manufacturer": "Oceanavigations", "tax_amount": 0, "product_id": 22878, "category": "Men's Clothing", "sku":</div>
<div style="position:absolute;left:395.40px;top:848.60px;width:1767.20px;height:1.60px;background:#d4dae5"></div>
<svg style="position:absolute;left:410.20px;top:869.10px;" width="9.60" height="15.20" viewBox="0 0 9.6 15.2"><path d="M1 1L8.4 7.6L1 14.2" fill="none" stroke="#2c2e38" stroke-width="1.5" stroke-linecap="round" stroke-linejoin="round"/></svg>
<span id="tm1" style="position:absolute;left:446.90px;top:870.00px;font:400 19.1px/1 'Liberation Mono', monospace;color:#2c2e38;letter-spacing:0.000px;white-space:pre;-webkit-text-stroke:0.3px #2c2e38;">Sep 15, 2020 @ 12:44:10.000</span>
<div class="src" style="top:866.31px"><b>category:</b><i>Women's</i> <i>Clothing</i>, <i>Women's</i> Shoes <b>currency:</b>EUR <b>customer_first_name:</b>Abigail <b>customer_full_name:</b>Abigail<br>Adams <b>customer_gender:</b>FEMALE <b>customer_id:</b>46 <b>customer_last_name:</b>Adams <b>customer_phone:</b> <b>day_of_week:</b>Tuesday<br><b>day_of_week_i:</b>1 <b>email:</b>abigail@adams-family.zzz <b>manufacturer:</b>Tigress Enterprises, Angeldale <b>order_date:</b>Sep 15,<br>2020 @ 12:44:10.000 <b>order_id:</b>567631 <b>products:</b>{ "base_price": 6.99, "discount_percentage": 0, "quantity": 1,<br>"manufacturer": "Tigress Enterprises", "tax_amount": 0, "product_id": 18119, "category": "Women's Clothing", "sku":</div>
<div style="position:absolute;left:395.40px;top:1067.50px;width:1767.20px;height:1.60px;background:#d4dae5"></div>
<svg style="position:absolute;left:410.20px;top:1088.10px;" width="9.60" height="15.20" viewBox="0 0 9.6 15.2"><path d="M1 1L8.4 7.6L1 14.2" fill="none" stroke="#2c2e38" stroke-width="1.5" stroke-linecap="round" stroke-linejoin="round"/></svg>
<span id="tm2" style="position:absolute;left:446.90px;top:1089.00px;font:400 19.1px/1 'Liberation Mono', monospace;color:#2c2e38;letter-spacing:0.000px;white-space:pre;-webkit-text-stroke:0.3px #2c2e38;">Sep 15, 2020 @ 12:34:05.000</span>
<div class="src" style="top:1085.31px"><b>category:</b><i>Women's</i> Shoes, <i>Women's</i> <i>Clothing</i> <b>currency:</b>EUR <b>customer_first_name:</b>Selena <b>customer_full_name:</b>Selena<br>Gregory <b>customer_gender:</b>FEMALE <b>customer_id:</b>42 <b>customer_last_name:</b>Gregory <b>customer_phone:</b> <b>day_of_week:</b>Tuesday<br><b>day_of_week_i:</b>1 <b>email:</b>selena@gregory-family.zzz <b>manufacturer:</b>Oceanavigations, Spherecords <b>order_date:</b>Sep 15,<br>2020 @ 12:34:05.000 <b>order_id:</b>567623 <b>products:</b>{ "base_price": 59.99, "discount_percentage": 0, "quantity": 1,<br>"manufacturer": "Oceanavigations", "tax_amount": 0, "product_id": 14283, "category": "Women's Shoes", "sku":</div>
<div style="position:absolute;left:395.40px;top:1286.40px;width:1767.20px;height:1.60px;background:#d4dae5"></div>
</div>
</body></html>
